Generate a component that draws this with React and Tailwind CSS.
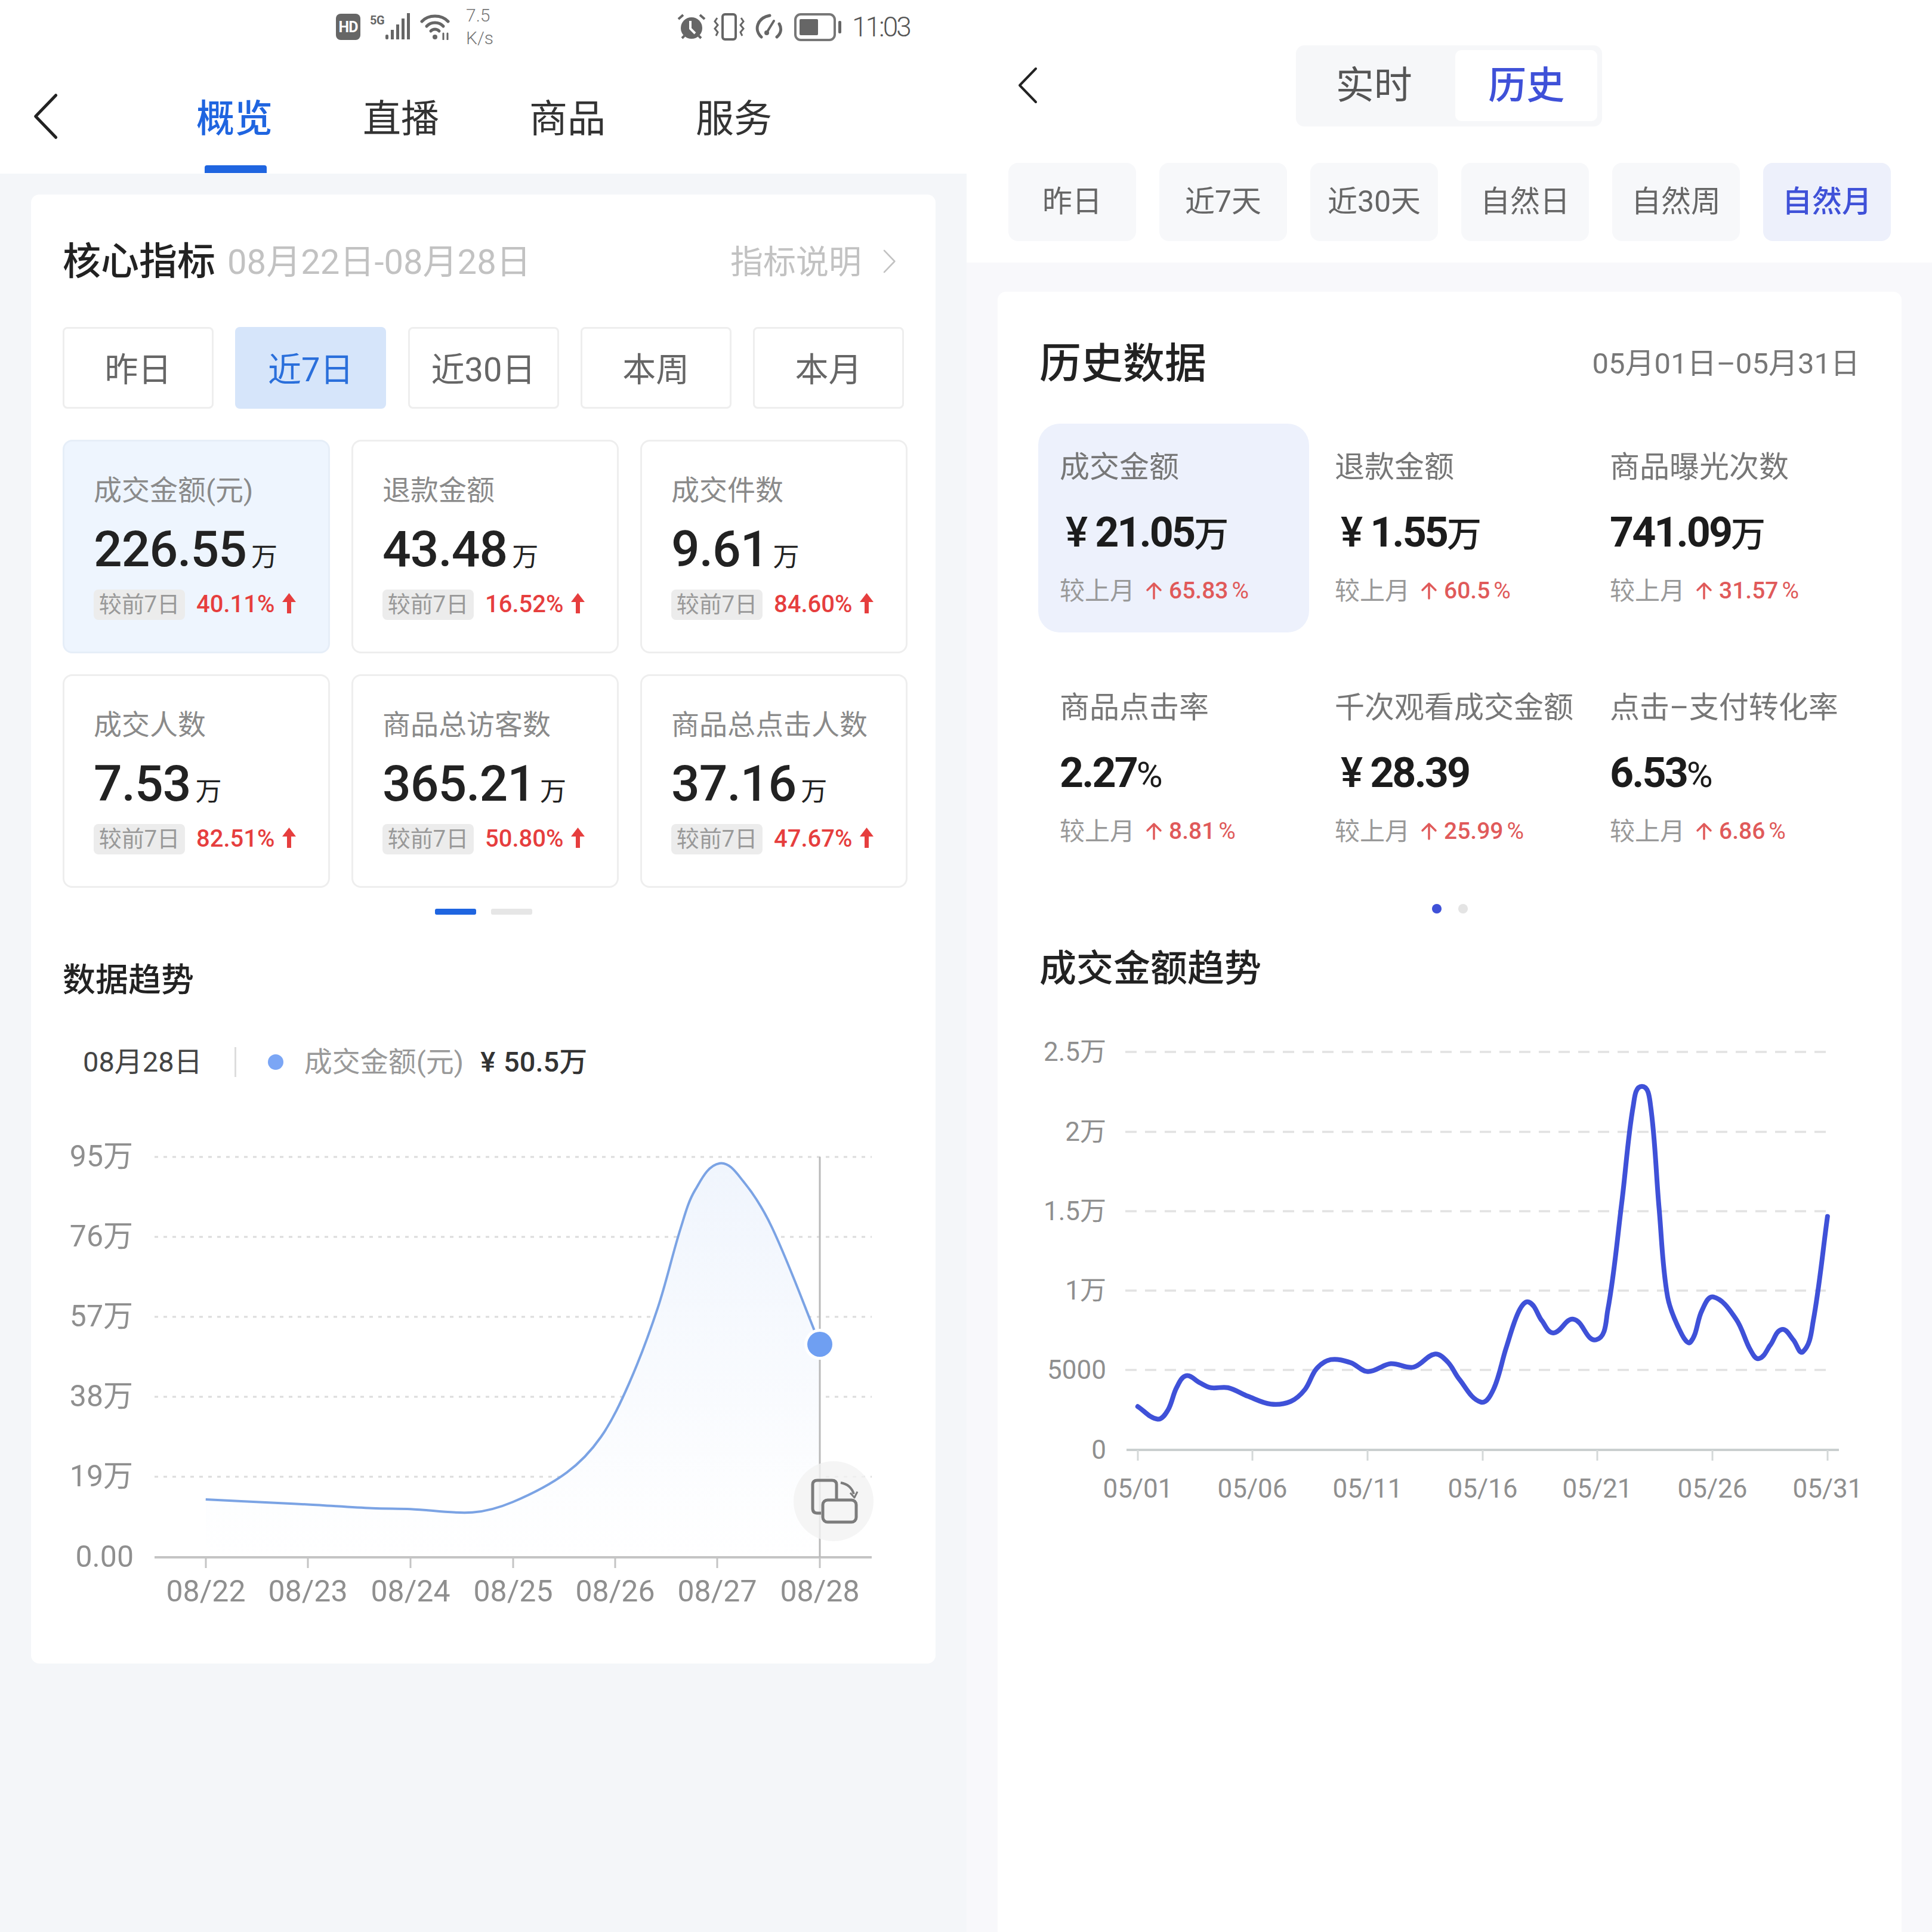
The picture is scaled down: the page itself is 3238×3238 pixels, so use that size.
import React from 'react';

const FONT = 'font-[Roboto,"Noto_Sans_CJK_SC",sans-serif]';

// smooth line through the points, tangent scaled to the segment length so uneven spacing doesn't kink
function smooth(pts) {
  const tangent = (i) => {
    const a = pts[i - 1] || pts[i];
    const b = pts[i + 1] || pts[i];
    const dx = b[0] - a[0];
    const dy = b[1] - a[1];
    const len = Math.hypot(dx, dy) || 1;
    return [dx / len, dy / len];
  };
  let d = `M${pts[0][0]} ${pts[0][1]}`;
  for (let i = 0; i < pts.length - 1; i++) {
    const p1 = pts[i];
    const p2 = pts[i + 1];
    const seg = Math.hypot(p2[0] - p1[0], p2[1] - p1[1]) / 3;
    const t1 = tangent(i);
    const t2 = tangent(i + 1);
    d += ` C${p1[0] + t1[0] * seg} ${p1[1] + t1[1] * seg} ${p2[0] - t2[0] * seg} ${p2[1] - t2[1] * seg} ${p2[0]} ${p2[1]}`;
  }
  return d;
}

const LEFT_CURVE = [
  [308, 1159], [487, 1171], [600, 1180], [667, 1182], [775, 1190], [846, 1165], [940, 1095],
  [1000, 1010], [1050, 880], [1100, 700], [1140, 510], [1165, 420], [1208, 356], [1250, 400],
  [1300, 510], [1384, 789],
].map(([x, y]) => [50 + x * 0.957, 1700 + y * 0.7015]);

const RIGHT_CURVE = [
  [237, 1180], [272, 1217], [290, 1190], [305, 1125], [322, 1090], [345, 1110], [365, 1125], [395, 1125],
  [430, 1150], [470, 1173], [505, 1165], [530, 1130], [550, 1070], [575, 1043], [610, 1052], [640, 1078],
  [680, 1055], [720, 1065], [757, 1027], [780, 1050], [800, 1100], [838, 1167], [860, 1130], [882, 1010],
  [905, 900], [922, 875], [945, 930], [965, 965], [1000, 925], [1040, 985], [1060, 900], [1085, 580],
  [1105, 300], [1120, 245], [1135, 300], [1150, 600], [1165, 860], [1190, 970], [1205, 992], [1225, 900],
  [1245, 860], [1285, 925], [1310, 1015], [1325, 1040], [1345, 1000], [1365, 955], [1385, 985], [1402, 1020],
  [1420, 930], [1445, 625],
].map(([x, y]) => [1680 + x * 0.957, 1680 + y * 0.574]);

const LEFT_STATS = [
  { label: '成交金额(元)', value: '226.55', pct: '40.11%', on: true },
  { label: '退款金额', value: '43.48', pct: '16.52%' },
  { label: '成交件数', value: '9.61', pct: '84.60%' },
  { label: '成交人数', value: '7.53', pct: '82.51%' },
  { label: '商品总访客数', value: '365.21', pct: '50.80%' },
  { label: '商品总点击人数', value: '37.16', pct: '47.67%' },
];

const RIGHT_STATS = [
  { label: '成交金额', yen: true, value: '21.05', unit: '万', pct: '65.83', on: true },
  { label: '退款金额', yen: true, value: '1.55', unit: '万', pct: '60.5' },
  { label: '商品曝光次数', value: '741.09', unit: '万', pct: '31.57' },
  { label: '商品点击率', value: '2.27', unit: '%', pct: '8.81' },
  { label: '千次观看成交金额', yen: true, value: '28.39', pct: '25.99' },
  { label: '点击–支付转化率', value: '6.53', unit: '%', pct: '6.86' },
];

function Chevron({ className, width = 3, right = false }) {
  return (
    <svg viewBox="0 0 34 62" className={className} fill="none" stroke="currentColor" strokeWidth={width} strokeLinecap="round" strokeLinejoin="round">
      <path d={right ? 'M3 3 L30 31 L3 59' : 'M31 3 L4 31 L31 59'} />
    </svg>
  );
}

function StatusBar() {
  return (
    <div className="h-[90px] flex items-center pl-[563px] text-[#666]">
      <svg viewBox="0 0 41 44" className="w-[41px] h-[44px]">
        <rect width="41" height="44" rx="8" fill="#666" />
        <text x="20.5" y="31" textAnchor="middle" fontSize="25" fontWeight="700" fill="#fff" fontFamily="Roboto" letterSpacing="-1">HD</text>
      </svg>
      <svg viewBox="0 0 70 46" className="w-[70px] h-[46px] ml-[16px]">
        <text x="0" y="19" fontSize="20" fontWeight="700" fill="#666" fontFamily="Roboto" letterSpacing="-0.5">5G</text>
        <rect x="26" y="36" width="5" height="8" rx="2" fill="#666" />
        <rect x="35" y="28" width="5" height="16" fill="#666" />
        <rect x="44" y="19" width="5" height="25" fill="#666" />
        <rect x="53" y="9" width="5" height="35" fill="#666" />
        <rect x="62" y="0" width="5" height="44" fill="#666" />
      </svg>
      <svg viewBox="0 0 52 44" className="w-[52px] h-[44px] ml-[14px]" fill="none" stroke="#666" strokeWidth="5" strokeLinecap="round">
        <path d="M3 13 C14 1 36 1 47 13" />
        <path d="M11 21 C18 13 32 13 39 21" />
        <path d="M18 29 C22 25 28 25 32 29" />
        <circle cx="25" cy="39" r="4" fill="#666" stroke="none" />
        <path d="M39 33 V43 M46 33 V43" strokeWidth="3" />
      </svg>
      <div className="ml-[25px] w-[50px] flex flex-col text-[30px] leading-[38px] font-light text-[#777] font-[Roboto,sans-serif]">
        <span>7.5</span>
        <span>K/s</span>
      </div>
      <svg viewBox="0 0 50 44" className="w-[50px] h-[44px] ml-[303px]">
        <circle cx="25" cy="24" r="18" fill="#666" />
        <path d="M23 12 V25 L31 33" stroke="#fff" strokeWidth="4" fill="none" />
        <path d="M3 9 L11 2 M47 9 L39 2 M9 41 L13 37 M41 41 L37 37" stroke="#666" strokeWidth="4" />
      </svg>
      <svg viewBox="0 0 54 46" className="w-[54px] h-[46px] ml-[11px]" fill="none" stroke="#666" strokeWidth="4">
        <rect x="16" y="2" width="22" height="42" rx="4" />
        <path d="M7 8 L3 14 L8 20 L3 26 L8 32 L5 38 M47 8 L51 14 L46 20 L51 26 L46 32 L49 38" strokeWidth="3" />
      </svg>
      <svg viewBox="0 0 49 46" className="w-[49px] h-[46px] ml-[15px]" fill="none" stroke="#666" strokeWidth="5" strokeLinecap="round">
        <path d="M12 40 C-1 28 5 8 26 4 M42 18 C47 27 44 35 38 40" />
        <path d="M22 31 L33 13" strokeWidth="4" />
        <circle cx="21" cy="33" r="4" fill="#666" stroke="none" />
      </svg>
      <svg viewBox="0 0 80 47" className="w-[80px] h-[47px] ml-[18px]" fill="none">
        <rect x="2" y="2" width="66" height="43" rx="9" stroke="#777" strokeWidth="4" />
        <rect x="9" y="10" width="31" height="27" rx="2" fill="#666" />
        <rect x="74" y="13" width="5" height="21" rx="2" fill="#666" />
      </svg>
      <span className="ml-[17px] text-[46px] font-light tracking-[-3px] text-[#555] font-[Roboto,sans-serif]">11:03</span>
    </div>
  );
}

function BoldUp() {
  return (
    <svg viewBox="0 0 23 34" className="w-[23px] h-[34px] ml-[12px] -mt-[4px]" fill="#e63e3e">
      <path d="M11.5 0 L23 15 H15 V34 H8 V15 H0 Z" />
    </svg>
  );
}

function ThinUp() {
  return (
    <svg viewBox="0 0 30 30" className="w-[30px] h-[30px] mr-[10px]" fill="none" stroke="#e05a5a" strokeWidth="3.5" strokeLinecap="round" strokeLinejoin="round">
      <path d="M15 28 V3 M4 14 L15 3 L26 14" />
    </svg>
  );
}

function LeftChart() {
  const ys = [1939, 2073, 2207, 2341, 2475];
  const yl = ['95万', '76万', '57万', '38万', '19万'];
  const xs = [345, 516, 688, 860, 1031, 1202, 1374];
  const xl = ['08/22', '08/23', '08/24', '08/25', '08/26', '08/27', '08/28'];
  const line = smooth(LEFT_CURVE);
  return (
    <svg viewBox="100 1900 1400 800" className="w-[1400px] h-[800px] -ml-[5px] mt-[90px] block" fontFamily="Roboto, 'Noto Sans CJK SC', sans-serif">
      <defs>
        <linearGradient id="area" x1="0" y1="0" x2="0" y2="1">
          <stop offset="0" stopColor="#f0f5fd" />
          <stop offset="1" stopColor="#ffffff" />
        </linearGradient>
      </defs>
      {ys.map((y, i) => (
        <g key={y}>
          <line x1="259" x2="1461" y1={y} y2={y} stroke="#dcdcdc" strokeWidth="3" strokeDasharray="6 9" />
          <text x="223" y={y + 16} textAnchor="end" fontSize="50" fill="#8f8f8f">{yl[i]}</text>
        </g>
      ))}
      <text x="224" y="2626" textAnchor="end" fontSize="50" fill="#8f8f8f">0.00</text>
      <path d={`${line} L1374 2610 L345 2610 Z`} fill="url(#area)" />
      <path d={line} fill="none" stroke="#7ba3e4" strokeWidth="4" />
      <line x1="259" x2="1461" y1="2610" y2="2610" stroke="#c4c4c4" strokeWidth="4" />
      {xs.map((x, i) => (
        <g key={x}>
          <line x1={x} x2={x} y1="2610" y2="2628" stroke="#c4c4c4" strokeWidth="3" />
          <text x={x} y="2684" textAnchor="middle" fontSize="50" fill="#8f8f8f">{xl[i]}</text>
        </g>
      ))}
      <line x1="1374" x2="1374" y1="1939" y2="2610" stroke="#b9b9b9" strokeWidth="3" />
      <circle cx="1374" cy="2253" r="26" fill="#fff" />
      <circle cx="1374" cy="2253" r="21" fill="#6f9ff2" />
      <circle cx="1397" cy="2516" r="67" fill="#f3f3f3" fillOpacity="0.8" />
      <g fill="none" stroke="#7c7c7c" strokeWidth="5" strokeLinejoin="round">
        <path d="M1376 2536 H1370 Q1362 2536 1362 2528 V2488 Q1362 2481 1370 2481 H1394 Q1402 2481 1402 2488 V2514" />
        <rect x="1379" y="2514" width="56" height="37" rx="8" />
        <path d="M1409 2485 Q1426 2488 1431 2504" strokeWidth="4" />
        <path d="M1425 2502 L1432 2510 L1437 2500" strokeWidth="3" />
      </g>
    </svg>
  );
}

function RightChart() {
  const ys = [1763, 1897, 2030, 2163, 2296];
  const yl = ['2.5万', '2万', '1.5万', '1万', '5000'];
  const xs = [1907, 2099, 2292, 2485, 2677, 2870, 3063];
  const xl = ['05/01', '05/06', '05/11', '05/16', '05/21', '05/26', '05/31'];
  return (
    <svg viewBox="1735 1720 1400 820" className="w-[1400px] h-[820px] -ml-[7px] mt-[62px] block" fontFamily="Roboto, 'Noto Sans CJK SC', sans-serif">
      {ys.map((y, i) => (
        <g key={y}>
          <line x1="1886" x2="3069" y1={y} y2={y} stroke="#e2e2e2" strokeWidth="3.5" strokeDasharray="19 14" />
          <text x="1854" y={y + 15} textAnchor="end" fontSize="44" fill="#8f8f8f">{yl[i]}</text>
        </g>
      ))}
      <text x="1854" y="2445" textAnchor="end" fontSize="44" fill="#8f8f8f">0</text>
      <line x1="1888" x2="3082" y1="2430" y2="2430" stroke="#c9cfcf" strokeWidth="4" />
      {xs.map((x) => (
        <line key={x} x1={x} x2={x} y1="2430" y2="2448" stroke="#d4d8d8" strokeWidth="3" />
      ))}
      <path d={smooth(RIGHT_CURVE)} fill="none" stroke="#3f51d8" strokeWidth="8" strokeLinecap="round" strokeLinejoin="round" />
      {xs.map((x, i) => (
        <text key={x} x={x} y="2510" textAnchor="middle" fontSize="44" fill="#8f8f8f">{xl[i]}</text>
      ))}
    </svg>
  );
}

function LeftPanel() {
  return (
    <div className="w-[1620px] shrink-0 flex flex-col">
      <div className="bg-white">
        <StatusBar />
        <div className="h-[201px] relative flex pl-[54px]">
          <Chevron className="w-[44px] h-[78px] mt-[66px] text-[#222]" width={4} />
          <div className="flex ml-[231px] gap-[151px] pt-[72px] text-[64px] leading-[75px] text-[#333]">
            <div className="flex flex-col items-center text-[#1f65e0] font-medium">
              <span>概览</span>
              <div className="mt-[40px] ml-[4px] w-[104px] h-[13px] rounded-t-[4px] bg-[#1f65e0]" />
            </div>
            <span>直播</span>
            <span>商品</span>
            <span>服务</span>
          </div>
        </div>
      </div>

      <div className="ml-[52px] mt-[35px] w-[1516px] h-[2462px] rounded-[14px] bg-white px-[53px] pt-[76px]">
        <div className="flex items-center h-[70px] pt-[4px]">
          <span className="text-[64px] font-medium text-[#222]">核心指标</span>
          <span className="ml-[20px] text-[58px] text-[#c2c2c2]">08月22日-08月28日</span>
          <span className="ml-auto text-[55px] text-[#c2c2c2]">指标说明</span>
          <Chevron right className="w-[24px] h-[40px] ml-[35px] mr-[12px] -mt-[3px] text-[#c2c2c2]" width={4} />
        </div>

        <div className="flex gap-[36.25px] mt-[76px]">
          {['昨日', '近7日', '近30日', '本周', '本月'].map((t) => (
            <div key={t} className={`w-[253px] h-[137px] rounded-[8px] flex items-center justify-center pt-[7px] text-[56px] ${t === '近7日' ? 'bg-[#d6e5fa] text-[#2a6fdb]' : 'border-[3px] border-[#eeeeee] text-[#666]'}`}>
              {t}
            </div>
          ))}
        </div>

        <div className="grid grid-cols-[448px_448px_448px] gap-x-[36px] gap-y-[35px] mt-[52px]">
          {LEFT_STATS.map((s) => (
            <div key={s.label} className={`h-[358px] rounded-[16px] border-[3px] pl-[49px] pt-[59px] ${s.on ? 'bg-[#eef5fe] border-[#e6eef8]' : 'border-[#eeeeee]'}`}>
              <div className="text-[47px] leading-[46px] text-[#8a8a8a]">{s.label}</div>
              <div className="flex items-baseline h-[100px] leading-[100px] mt-[26px] text-[#222]">
                <span className="text-[84px] font-medium tracking-[-1px]">{s.value}</span>
                <span className="text-[44px] ml-[8px]">万</span>
              </div>
              <div className="flex items-center mt-[12px]">
                <span className="h-[51px] w-[153px] rounded-[8px] bg-[#ececec] text-[#999] text-[38px] flex items-center justify-center">较前7日</span>
                <span className="ml-[19px] text-[40px] font-medium text-[#e63e3e]">{s.pct}</span>
                <BoldUp />
              </div>
            </div>
          ))}
        </div>

        <div className="flex justify-center gap-[25px] w-[1410px] mt-[35px]">
          <div className="w-[69px] h-[10px] rounded-[3px] bg-[#1f65e0]" />
          <div className="w-[69px] h-[10px] rounded-[3px] bg-[#e6e6e6]" />
        </div>

        <div className="mt-[74px] h-[70px] flex items-center text-[55px] font-medium text-[#222]">数据趋势</div>

        <div className="mt-[73px] h-[60px] flex items-center pl-[34px] text-[47px]">
          <span className="text-[#444]">08月28日</span>
          <div className="ml-[54px] w-[3px] h-[50px] bg-[#dddddd]" />
          <div className="ml-[53px] w-[26px] h-[26px] rounded-full bg-[#7ba6f5]" />
          <span className="ml-[35px] text-[#999]">成交金额(元)</span>
          <span className="ml-[28px] font-medium text-[#333]">¥<span className="ml-[14px]">50.5万</span></span>
        </div>

        <LeftChart />
      </div>
    </div>
  );
}

function RightPanel() {
  return (
    <div className="w-[1618px] shrink-0 flex flex-col bg-[#f8f8fb]">
      <div className="bg-white h-[440px] pt-[76px]">
        <div className="flex">
          <Chevron className="w-[34px] h-[62px] ml-[85px] mt-[36px] text-[#222]" width={4} />
          <div className="ml-[433px] w-[513px] h-[136px] p-[8px] flex rounded-[14px] bg-[#f6f7f9] text-[64px]">
            <div className="w-[246px] flex items-center justify-center text-[#555]">实时</div>
            <div className="ml-[14px] w-[238px] h-[119px] rounded-[10px] bg-white flex items-center justify-center text-[#3f51d8] font-medium">历史</div>
          </div>
        </div>
        <div className="flex gap-[39px] pl-[70px] mt-[61px]">
          {['昨日', '近7天', '近30天', '自然日', '自然周', '自然月'].map((t) => (
            <div key={t} className={`w-[214px] h-[131px] rounded-[16px] flex items-center justify-center text-[50px] ${t === '自然月' ? 'bg-[#edf0fb] text-[#3f51d8] font-medium' : 'bg-[#f7f8fa] text-[#666]'}`}>
              {t}
            </div>
          ))}
        </div>
      </div>

      <div className="ml-[52px] mt-[49px] w-[1515px] flex-1 rounded-t-[14px] bg-white px-[70px] pt-[81px]">
        <div className="h-[80px] flex items-center justify-between">
          <span className="text-[70px] font-medium text-[#222]">历史数据</span>
          <span className="text-[49px] text-[#777]">05月01日–05月31日</span>
        </div>

        <div className="grid grid-cols-[454px_454px_454px] gap-x-[7px] gap-y-[53px] mt-[60px] -ml-[2px]">
          {RIGHT_STATS.map((s) => (
            <div key={s.label} className={`h-[350px] rounded-[36px] pl-[36px] pt-[45px] ${s.on ? 'bg-[#edf1fc]' : ''}`}>
              <div className="text-[50px] leading-[56px] text-[#777] whitespace-nowrap">{s.label}</div>
              <div className="flex items-baseline h-[90px] leading-[90px] mt-[36px] text-[#1c1c1c] font-medium">
                {s.yen && <span className="text-[70px] ml-[10px] mr-[12px]">¥</span>}
                <span className="text-[70px] tracking-[-3px] font-bold">{s.value}</span>
                {s.unit === '万' && <span className="text-[58px] font-medium">万</span>}
                {s.unit === '%' && <span className="text-[60px] font-normal">%</span>}
              </div>
              <div className="flex items-center h-[50px] mt-[28px]">
                <span className="text-[42px] text-[#999] mr-[17px]">较上月</span>
                <ThinUp />
                <span className="text-[39px] font-medium text-[#e05a5a]">{s.pct}</span>
                <span className="text-[39px] ml-[6px] text-[#e05a5a]">%</span>
              </div>
            </div>
          ))}
        </div>

        <div className="flex justify-center gap-[28px] mt-[52px]">
          <div className="w-[16px] h-[16px] rounded-full bg-[#3f51d8]" />
          <div className="w-[16px] h-[16px] rounded-full bg-[#e4e4e4]" />
        </div>

        <div className="mt-[57px] h-[70px] flex items-center text-[62px] font-medium text-[#222]">成交金额趋势</div>

        <RightChart />
      </div>
    </div>
  );
}

export default function App() {
  return (
    <div className={`w-[3238px] h-[3238px] flex overflow-hidden bg-[#f4f6f9] ${FONT}`}>
      <LeftPanel />
      <RightPanel />
    </div>
  );
}
